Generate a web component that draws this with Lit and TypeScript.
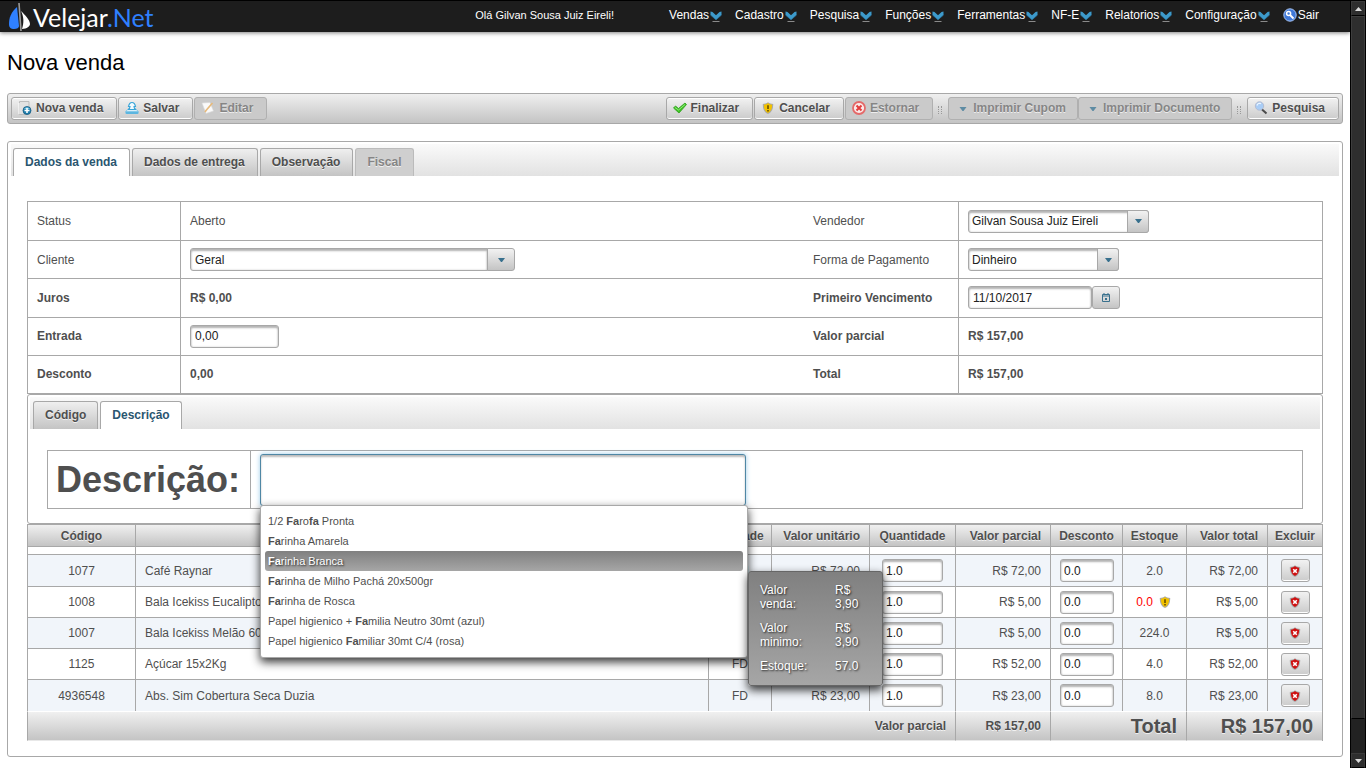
import { LitElement, html, css, svg, nothing } from "lit";
import { customElement } from "lit/decorators.js";
import { classMap } from "lit/directives/class-map.js";

const chevron = html`<svg class="chev" width="12" height="13" viewBox="0 0 12 13" aria-hidden="true">
  <path d="M.5 1.500L2.500 2L6 5.200L9.500 2L11.500 1.500V5L6 9.800L.5 5Z" fill="#3d9acb"/>
  <path d="M.5 5L6 9.800L11.500 5" fill="none" stroke="#2a7ba8" stroke-width=".8"/>
  <path d="M2.500 11.500H9.500" stroke="#8a8a8a"/></svg>`;

const arrow = html`<svg class="arrow" width="7" height="4" viewBox="0 0 7 4" aria-hidden="true"><path d="M0 0H7L4 4H3Z" fill="#38708d"/></svg>`;

const shield = (fill: string, mark: unknown) => html`<svg width="16" height="16" viewBox="0 0 16 16" aria-hidden="true">
  <path d="M8 2.2C6.6 3.4 4.8 3.7 2.8 3.9C2.8 8 3.6 11.8 8 14C12.4 11.8 13.2 8 13.2 3.9C11.2 3.7 9.4 3.4 8 2.2Z" fill="#a9a9a9"/>
  <path d="M8 3C6.900 4 5.400 4.500 3.900 4.700C3.900 8.200 4.700 11.200 8 13C11.300 11.200 12.100 8.200 12.100 4.700C10.600 4.500 9.100 4 8 3Z" fill=${fill}/>${mark}</svg>`;

const warn = shield("#f2c200", svg`<path d="M8 5.2V9M8 10V11.4" stroke="#5c4700" stroke-width="1.5"/>`);
const kill = shield("#cf1010", svg`<path d="M6.2 6.2L9.8 9.8M9.8 6.2L6.2 9.8" stroke="#fff" stroke-width="1.6"/>`);

const icons: Record<string, unknown> = {
  novo: html`<svg width="16" height="16" viewBox="0 0 16 16"><path d="M2.500 1.500H12V14.5H2.500Z" fill="#e2e2e2" stroke="#bdbdbd"/><path d="M2 3V14" stroke="#fff"/><circle cx="10" cy="10.5" r="4" fill="#1f7fae" stroke="#1c5c80" stroke-width=".8"/><path d="M7 9a3.4 3.4 0 0 1 6 0Z" fill="#7cc8e6"/><path d="M10 8V13M7.5 10.5H12.5" stroke="#fff" stroke-width="1.6"/></svg>`,
  salvar: html`<svg width="16" height="16" viewBox="0 0 16 16"><path d="M3.500 9.500H12.500L14.500 12H1.500Z" fill="#d8f0fb" stroke="#6fc0e4" stroke-width=".8"/><rect x="1.500" y="11.500" width="13" height="2.500" rx="1" fill="#5cb6e0"/><path d="M8 2.500C10 2.500 11 4 11.500 6.500H10C10 8 10.500 9 12 9.500H4C5.500 9 6 8 6 6.500H4.500C5 4 6 2.500 8 2.500Z" fill="#f2fbff" stroke="#3aa5d8" stroke-width="1.200"/></svg>`,
  editar: html`<svg width="16" height="16" viewBox="0 0 16 16"><path d="M2 3L10 2.5L13.5 11L6 13.5Z" fill="#fafafa" stroke="#d9d9d9" stroke-width=".6"/><path d="M12.5 3L6 10.5L5 12" stroke="#e7b97a" stroke-width="1.6" fill="none"/></svg>`,
  ok: html`<svg width="16" height="16" viewBox="0 0 16 16"><path d="M1.500 8L3.500 6L6.500 8.500L13 3L14.500 4.500L7 13Z" fill="#3dc424" stroke="#2f9e1c" stroke-width=".8"/><path d="M3 7.500L6.500 10L13 4.500" stroke="#9bec86" stroke-width=".9" fill="none"/></svg>`,
  warn,
  estornar: html`<svg width="16" height="16" viewBox="0 0 16 16"><circle cx="8" cy="8" r="6" fill="#fbeaea" stroke="#e46a6a" stroke-width="1.8"/><path d="M5.5 5.5L10.5 10.5M10.5 5.5L5.5 10.5" stroke="#e23c3c" stroke-width="2"/></svg>`,
  lupa: html`<svg width="16" height="16" viewBox="0 0 16 16"><path d="M8.5 9L13.5 13.5" stroke="#4b4b4b" stroke-width="2"/><circle cx="6.5" cy="6" r="4.2" fill="#a9cdf6" stroke="#b4bcd0" stroke-width="1"/><path d="M4 5.5A2.8 2.8 0 0 1 8 3.6" stroke="#eef6ff" stroke-width="1.2" fill="none"/></svg>`,
  menu: html`<svg width="16" height="16" viewBox="0 0 16 16"><path d="M4.500 7H11.500L8.500 11H7.500Z" fill="#5d8ba3"/></svg>`,
};

interface Btn { t: string; i: string; off?: boolean }
const left: Btn[] = [{ t: "Nova venda", i: "novo" }, { t: "Salvar", i: "salvar" }, { t: "Editar", i: "editar", off: true }];
const mid: Btn[] = [{ t: "Finalizar", i: "ok" }, { t: "Cancelar", i: "warn" }, { t: "Estornar", i: "estornar", off: true }];
const print: Btn[] = [{ t: "Imprimir Cupom", i: "menu", off: true }, { t: "Imprimir Documento", i: "menu", off: true }];

const menus = ["Vendas", "Cadastro", "Pesquisa", "Funções", "Ferramentas", "NF-E", "Relatorios", "Configuração"];

const rows = [
  { cod: "1077", nome: "Café Raynar", un: "UN", v: "R$ 72,00", est: "2.0" },
  { cod: "1008", nome: "Bala Icekiss Eucalipto", un: "UN", v: "R$ 5,00", est: "0.0", falta: true },
  { cod: "1007", nome: "Bala Icekiss Melão 60", un: "UN", v: "R$ 5,00", est: "224.0" },
  { cod: "1125", nome: "Açúcar 15x2Kg", un: "FD", v: "R$ 52,00", est: "4.0" },
  { cod: "4936548", nome: "Abs. Sim Cobertura Seca Duzia", un: "FD", v: "R$ 23,00", est: "8.0" },
];

const suggestions = [
  html`1/2 <b>Fa</b>ro<b>fa</b> Pronta`,
  html`<b>Fa</b>rinha Amarela`,
  html`<b>Fa</b>rinha Branca`,
  html`<b>Fa</b>rinha de Milho Pachá 20x500gr`,
  html`<b>Fa</b>rinha de Rosca`,
  html`Papel higienico + <b>Fa</b>milia Neutro 30mt (azul)`,
  html`Papel higienico <b>Fa</b>miliar 30mt C/4 (rosa)`,
];

@customElement("app-root")
export class AppRoot extends LitElement {
  static styles = css`
    :host { display: block; font: 12px/14px "Liberation Sans", Arial, sans-serif; color: #4f4f4f; background: #fff; }
    * { box-sizing: border-box; }
    button, input, select { font: inherit; color: inherit; margin: 0; }
    svg { display: block; flex: none; }
    .frame { display: flex; min-height: 100vh; border-top: 1px solid #000; }
    .page { flex: 1; min-width: 0; }

    .top { display: flex; align-items: center; height: 31px; padding: 0 31px 0 8px; background: #1d1d1d; color: #fff; box-shadow: 0 1px 4px rgba(0,0,0,.5); }
    .brand { display: flex; align-items: center; gap: 2px; margin-right: auto; color: #fff; text-decoration: none; font: 25px/28px Lato, sans-serif; }
    .brand span { color: #2f80ff; }
    .hello { font-size: 11px; margin-right: 55px; padding-bottom: 4px; }
    .nav { display: flex; gap: 13px; padding-bottom: 4px; }
    .nav a { display: flex; align-items: center; gap: 1px; color: #fff; text-decoration: none; }
    .chev { margin-top: 3px; }

    .title { margin: 0; padding: 17px 7px; font: 22px/27px "Liberation Sans", Arial, sans-serif; color: #000; }
    .bar { display: flex; align-items: center; gap: 1px; margin: 0 7px 17px; padding: 3px; min-height: 30px; border: 1px solid #a8a8a8; border-radius: 3px; background: linear-gradient(#efefef, #c4c4c4); }
    .btn { display: flex; align-items: center; gap: 3px; height: 23px; padding: 0 13px 2px 5px; border: 1px solid #a8a8a8; border-radius: 3px; background: linear-gradient(#f2f2f2, #cbcbcb); box-shadow: inset 0 -1px 0 #fff, inset 0 1px 0 #fff; font-weight: bold; text-shadow: 0 1px 0 rgba(255,255,255,.7); white-space: nowrap; }
    .btn:disabled { color: #858585; border-color: #b0b0b0; background: #cacaca; box-shadow: none; }
    .spring { flex: 1; }
    .joined { display: flex; }
    .joined .btn { gap: 2px; padding: 0 11px 2px 6px; }
    .sep { width: 4px; height: 8px; margin: 2px 5px 0 4px; border: dotted #999; border-width: 0 1px; }

    .panel { margin: 0 7px; padding: 2px 3px 15px; border: 1px solid #a8a8a8; border-radius: 3px; }
    .tabs { display: flex; gap: 2px; padding: 4px 2px 0; height: 32px; background: linear-gradient(#fafafa, #e2e2e2); }
    .tab { height: 28px; padding: 0 12px 1px 11px; border: 1px solid #a8a8a8; border-bottom: 0; border-radius: 3px 3px 0 0; background: linear-gradient(#efefef, #c4c4c4); font-weight: bold; text-shadow: 0 1px 0 rgba(255,255,255,.7); }
    .tab.on { background: #fff; color: #2a5670; }
    .tab:disabled { color: #858585; background: #cfcfcf; border-color: #bbb; }
    .content { padding: 25px 16px 0; }

    .form { display: grid; grid-auto-rows: 1fr; min-height: 193px; border: 1px solid #a8a8a8; }
    .line { display: grid; grid-template-columns: 152px 624fr 154px 364fr; border-top: 1px solid #a8a8a8; }
    .line:first-child { border-top: 0; }
    .cell { display: flex; align-items: center; padding: 0 9px; }
    .cell:nth-child(even) { border-left: 1px solid #a8a8a8; }
    .strong { font-weight: bold; }

    .field { height: 23px; padding: 0 4px; border: 1px solid #a8a8a8; border-radius: 3px; background: #fff; color: #222; font-weight: normal; box-shadow: inset 0 2px 2px #b4b4b4, inset 0 0 2px #c4c4c4; outline: 0; }
    .combo { display: grid; grid-template-columns: 1fr 22px; height: 23px; }
    .combo select { grid-area: 1 / 1 / 2 / 3; appearance: none; padding: 0 3px; }
    .knob { display: flex; align-items: center; justify-content: center; border: 1px solid #a8a8a8; border-radius: 0 3px 3px 0; background: linear-gradient(#f2f2f2, #c4c4c4); padding: 0; }
    .combo .knob { grid-area: 1 / 2; pointer-events: none; }
    .seller { width: 181px; }
    .pay { width: 151px; }
    .client { width: 298px; border-radius: 3px 0 0 3px; }
    .client-knob { width: 28px; height: 23px; margin-left: -1px; }
    .entry { width: 89px; }
    .date { width: 124px; }
    .date-knob { width: 28px; height: 23px; border-radius: 3px; }

    .inner { padding: 2px 2px 14px; border: 1px solid #a8a8a8; border-radius: 3px; }
    .inner .tabs { padding-left: 3px; }
    .inner .tab { padding: 0 11px 1px; }
    .search { display: grid; grid-template-columns: 203px 1fr; height: 59px; margin: 21px 17px 0; border: 1px solid #a8a8a8; }
    .search-label { display: flex; align-items: center; padding-left: 8px; font-size: 36px; line-height: 42px; font-weight: bold; border-right: 1px solid #a8a8a8; }
    .search-cell { padding: 3px 9px; }
    .auto { position: relative; width: 486px; }
    .big { display: block; width: 100%; height: 52px; padding: 0 8px; font-size: 36px; border-color: #4f87a5; box-shadow: 0 0 5px #9ccbe8, inset 0 2px 2px #bbb; }
    .list { position: absolute; left: 0; right: -2px; top: 51px; z-index: 2; margin: 0; padding: 5px 4px 6px; list-style: none; background: #fff; border: 1px solid #a8a8a8; border-radius: 3px; box-shadow: 0 4px 10px rgba(0,0,0,.8); font-size: 11px; }
    .item { height: 20px; line-height: 20px; padding: 0 3px; border-radius: 3px; white-space: nowrap; }
    .item.hot { color: #fff; background: linear-gradient(#808080, #a6a6a6); text-shadow: 1px 1px 2px #222; }
    .tip { position: absolute; left: 488px; top: 117px; z-index: 3; width: 135px; margin: 0; padding: 11px 11px 12px; display: grid; grid-template-columns: 75px auto; row-gap: 10px; color: #fff; border: 1px solid #666; border-radius: 3px; background: linear-gradient(#808080, #a6a6a6); box-shadow: 0 4px 10px rgba(0,0,0,.8); text-shadow: 1px 1px 2px #222; }
    .tip dt { width: 50px; }
    .tip dd { margin: 0; width: 30px; }

    .grid { width: 100%; table-layout: fixed; border-collapse: separate; border-spacing: 0; border-right: 1px solid #a8a8a8; }
    .grid th, .grid td { padding: 0 9px; border-left: 1px solid #a8a8a8; overflow: hidden; white-space: nowrap; text-align: center; }
    .grid th { height: 23px; padding: 0 2px; background: linear-gradient(#f0f0f0, #c4c4c4); border-top: 1px solid #a8a8a8; border-bottom: 1px solid #a8a8a8; text-shadow: 0 1px 0 rgba(255,255,255,.7); }
    .grid .gap td { height: 7px; line-height: 0; }
    .grid .item-row td { height: 31px; border-top: 1px solid #a8a8a8; }
    .grid .item-row.edge td { height: 32px; }
    .grid .item-row.odd td { background: #f1f5fa; }
    .grid .name { text-align: left; }
    .grid td.money { text-align: right; }
    .grid th.money { text-align: right; padding-right: 9px; }
    .grid .foot td { height: 30px; text-align: right; font-weight: bold; border-top: 1px solid #fff; border-bottom: 1px solid #e8e8e8; background: linear-gradient(#f0f0f0, #c4c4c4); text-shadow: 0 1px 0 rgba(255,255,255,.7); }
    .grid .foot .large { font-size: 20px; line-height: 24px; }
    .qty { width: 61px; }
    .disc { width: 54px; }
    .grid .field { padding: 0 3px; }
    .c-cod { width: 108px; } .c-un { width: 63px; } .c-vu { width: 98px; } .c-q { width: 86px; } .c-vp { width: 95px; }
    .c-d { width: 72px; } .c-e { width: 64px; } .c-vt { width: 81px; } .c-x { width: 55px; }
    .stock { display: flex; justify-content: center; align-items: center; gap: 4px; }
    .stock.out { color: #f00; }
    .del { display: flex; align-items: center; justify-content: center; width: 29px; height: 23px; margin: 0 auto; padding: 0; border: 1px solid #a8a8a8; border-radius: 3px; background: linear-gradient(#f2f2f2, #cbcbcb); box-shadow: inset 0 -1px 0 #fff; }

    .scroll { flex: none; width: 16px; display: flex; flex-direction: column; background: #222; border-left: 1px solid #000; border-right: 1px solid #000; }
    .scroll-btn { display: flex; align-items: center; justify-content: center; height: 15px; padding: 0; background: #2e2e2e; border: 1px solid #3a3a3a; border-bottom-color: #000; }
    .scroll-thumb { flex: 702; background: #2e2e2e; border: 1px solid #3d3d3d; border-bottom-color: #000; }
    .scroll-rest { flex: 34; }
  `;

  private button(b: Btn) {
    return html`<button type="button" class="btn" ?disabled=${b.off}>${icons[b.i]}<span>${b.t}</span></button>`;
  }

  render() {
    return html`<div class="frame"><div class="page">
      <header class="top">
        <a class="brand" href="#" aria-label="Velejar.Net">
          <svg width="23" height="28" viewBox="0 0 23 28"><path d="M9 4C3 9 1 15 1 21C1 25 3 26 6 26C9 26 11 25 11 23Z" fill="#2f80ff"/><path d="M13 8C17 12 22 17 22 21C22 23 19 26 14 26C16 20 16 14 13 8Z" fill="#fff"/><path d="M11 0L13 28" stroke="#9a9a9a" stroke-width="1.6"/></svg>
          <div>Velejar<span>.Net</span></div>
        </a>
        <div class="hello">Olá Gilvan Sousa Juiz Eireli!</div>
        <nav class="nav">
          ${menus.map((m) => html`<a href="#">${m}${chevron}</a>`)}
          <a href="#"><svg width="14" height="14" viewBox="0 0 14 14"><circle cx="7" cy="7" r="6.2" fill="#3f78d8" stroke="#a9c6f5"/><circle cx="5.6" cy="5.400" r="2" fill="none" stroke="#fff" stroke-width="1.5"/><path d="M7 7L10.500 10.500" stroke="#fff" stroke-width="1.8"/></svg>Sair</a>
        </nav>
      </header>
      <h1 class="title">Nova venda</h1>
      <div class="bar">
        ${left.map((b) => this.button(b))}
        <div class="spring"></div>
        ${mid.map((b) => this.button(b))}
        <div class="sep"></div>
        <div class="joined">${print.map((b) => this.button(b))}</div>
        <div class="sep"></div>
        ${this.button({ t: "Pesquisa", i: "lupa" })}
      </div>
      <main class="panel">
        <div class="tabs">
          <button class="tab on">Dados da venda</button><button class="tab">Dados de entrega</button><button class="tab">Observação</button><button class="tab" disabled>Fiscal</button>
        </div>
        <div class="content">
          <div class="form">
            <div class="line">
              <div class="cell">Status</div><div class="cell">Aberto</div>
              <div class="cell"><label for="vend">Vendedor</label></div>
              <div class="cell"><div class="combo seller"><select id="vend" class="field"><option>Gilvan Sousa Juiz Eireli</option></select><span class="knob">${arrow}</span></div></div>
            </div>
            <div class="line">
              <div class="cell"><label for="cli">Cliente</label></div>
              <div class="cell"><input id="cli" class="field client" .value=${"Geral"}><button class="knob client-knob" aria-label="Abrir clientes">${arrow}</button></div>
              <div class="cell"><label for="pag">Forma de Pagamento</label></div>
              <div class="cell"><div class="combo pay"><select id="pag" class="field"><option>Dinheiro</option></select><span class="knob">${arrow}</span></div></div>
            </div>
            <div class="line strong">
              <div class="cell">Juros</div><div class="cell">R$ 0,00</div>
              <div class="cell"><label for="venc">Primeiro Vencimento</label></div>
              <div class="cell"><input id="venc" class="field date" .value=${"11/10/2017"}><button class="knob date-knob" aria-label="Calendário"><svg width="8" height="9" viewBox="0 0 8 9"><path d="M.5 1.500H7.500V8.500H.5ZM.5 3H7.500" fill="none" stroke="#38708d"/><path d="M2 0V2M6 0V2" stroke="#38708d"/><path d="M3 5H5V7H3Z" fill="#38708d"/></svg></button></div>
            </div>
            <div class="line strong">
              <div class="cell"><label for="ent">Entrada</label></div><div class="cell"><input id="ent" class="field entry" .value=${"0,00"}></div>
              <div class="cell">Valor parcial</div><div class="cell">R$ 157,00</div>
            </div>
            <div class="line strong">
              <div class="cell">Desconto</div><div class="cell">0,00</div>
              <div class="cell">Total</div><div class="cell">R$ 157,00</div>
            </div>
          </div>
          <section class="inner">
            <div class="tabs"><button class="tab">Código</button><button class="tab on">Descrição</button></div>
            <div class="search">
              <label class="search-label" for="desc">Descrição:</label>
              <div class="search-cell"><div class="auto">
                <input id="desc" class="field big">
                <ul class="list">${suggestions.map((s, i) => html`<li class=${classMap({ item: true, hot: i === 2 })}>${s}</li>`)}</ul>
                <dl class="tip"><dt>Valor venda:</dt><dd>R$ 3,90</dd><dt>Valor minimo:</dt><dd>R$ 3,90</dd><dt>Estoque:</dt><dd>57.0</dd></dl>
              </div></div>
            </div>
          </section>
          <table class="grid">
            <colgroup><col class="c-cod"><col><col class="c-un"><col class="c-vu"><col class="c-q"><col class="c-vp"><col class="c-d"><col class="c-e"><col class="c-vt"><col class="c-x"></colgroup>
            <thead><tr><th>Código</th><th>Descrição</th><th>Unidade</th><th class="money">Valor unitário</th><th>Quantidade</th><th class="money">Valor parcial</th><th>Desconto</th><th>Estoque</th><th class="money">Valor total</th><th>Excluir</th></tr></thead>
            <tbody>
              <tr class="gap">${Array.from({ length: 10 }, () => html`<td></td>`)}</tr>
              ${rows.map((r, i) => html`<tr class=${classMap({ "item-row": true, odd: i % 2 === 0, edge: i === 0 || i === 4 })}>
                <td>${r.cod}</td><td class="name">${r.nome}</td><td>${r.un}</td><td class="money">${r.v}</td>
                <td><input class="field qty" aria-label="Quantidade" .value=${"1.0"}></td>
                <td class="money">${r.v}</td>
                <td><input class="field disc" aria-label="Desconto" .value=${"0.0"}></td>
                <td><div class=${classMap({ stock: true, out: !!r.falta })}>${r.est}${r.falta ? warn : nothing}</div></td>
                <td class="money">${r.v}</td>
                <td><button class="del" aria-label="Excluir">${kill}</button></td></tr>`)}
            </tbody>
            <tfoot><tr class="foot"><td colspan="5">Valor parcial</td><td>R$ 157,00</td><td colspan="2" class="large">Total</td><td colspan="2" class="large">R$ 157,00</td></tr></tfoot>
          </table>
        </div>
      </main>
    </div>
    <div class="scroll">
      <button class="scroll-btn" aria-label="Subir"><svg width="7" height="4" viewBox="0 0 7 4"><path d="M0 4H7L3.500 0Z" fill="#ddd"/></svg></button>
      <div class="scroll-thumb"></div><div class="scroll-rest"></div>
      <button class="scroll-btn" aria-label="Descer"><svg width="7" height="4" viewBox="0 0 7 4"><path d="M0 0H7L3.500 4Z" fill="#ddd"/></svg></button>
    </div></div>`;
  }
}
